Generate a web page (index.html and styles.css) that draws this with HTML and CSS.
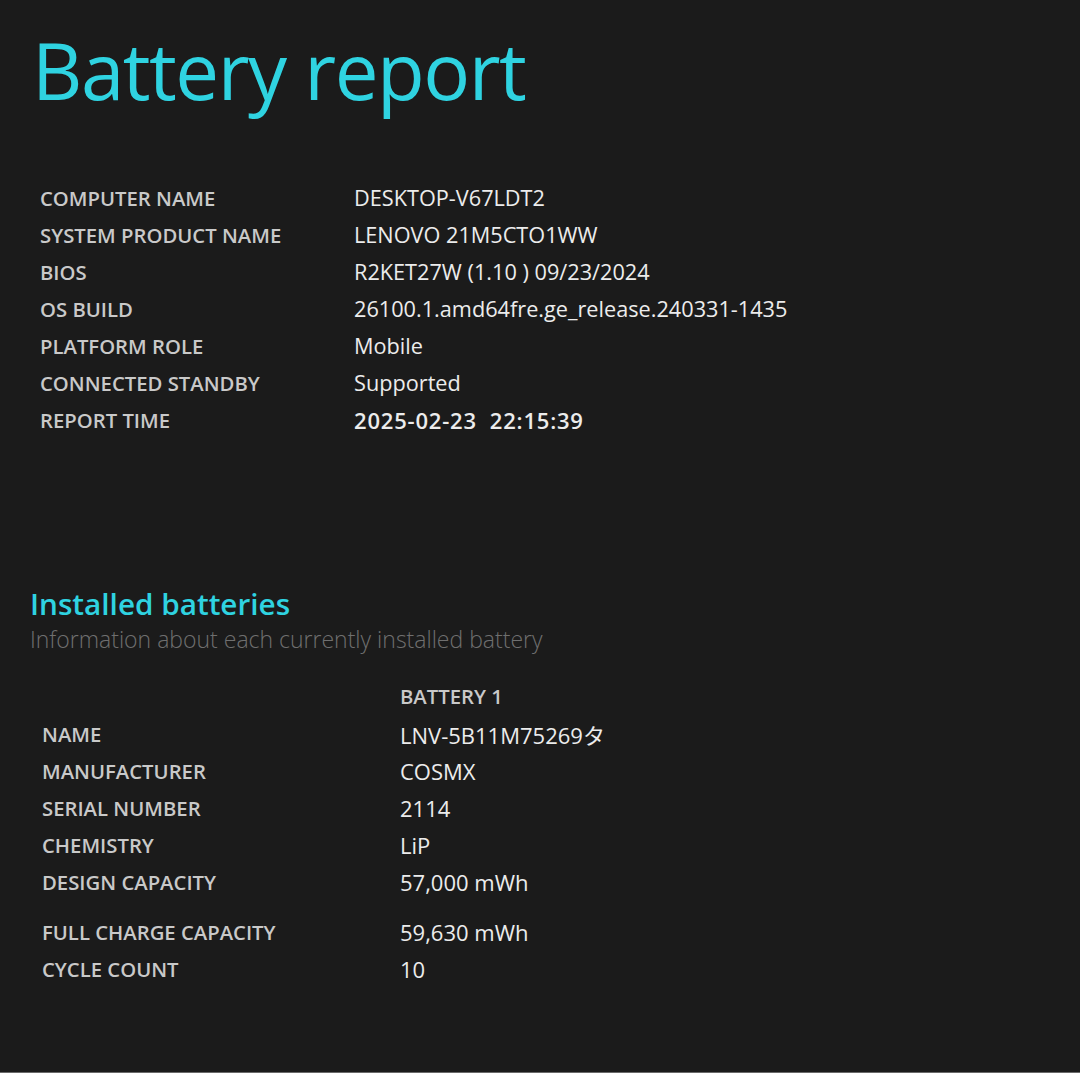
FILE: index.html
```html
<!DOCTYPE html>
<html lang="en">
<head>
    <meta charset="UTF-8">
    <title>Battery report</title>
    <link rel="stylesheet" href="styles.css">
</head>
<body>
    <div class="page">
        <h1 class="title">Battery report</h1>

        <table class="info">
            <tr><td class="label">COMPUTER NAME</td><td class="value">DESKTOP-V67LDT2</td></tr>
            <tr><td class="label">SYSTEM PRODUCT NAME</td><td class="value">LENOVO 21M5CTO1WW</td></tr>
            <tr><td class="label">BIOS</td><td class="value">R2KET27W (1.10 ) 09/23/2024</td></tr>
            <tr><td class="label">OS BUILD</td><td class="value">26100.1.amd64fre.ge_release.240331-1435</td></tr>
            <tr><td class="label">PLATFORM ROLE</td><td class="value">Mobile</td></tr>
            <tr><td class="label">CONNECTED STANDBY</td><td class="value">Supported</td></tr>
            <tr><td class="label">REPORT TIME</td><td class="value strong">2025-02-23&nbsp; 22:15:39</td></tr>
        </table>

        <h2 class="section-title">Installed batteries</h2>
        <p class="section-sub">Information about each currently installed battery</p>

        <table class="batteries">
            <tr class="head"><td class="label"></td><td class="label">BATTERY 1</td></tr>
            <tr><td class="label">NAME</td><td class="value">LNV-5B11M75269タ</td></tr>
            <tr><td class="label">MANUFACTURER</td><td class="value">COSMX</td></tr>
            <tr><td class="label">SERIAL NUMBER</td><td class="value">2114</td></tr>
            <tr><td class="label">CHEMISTRY</td><td class="value">LiP</td></tr>
            <tr><td class="label">DESIGN CAPACITY</td><td class="value">57,000 mWh</td></tr>
            <tr class="spaced"><td class="label">FULL CHARGE CAPACITY</td><td class="value">59,630 mWh</td></tr>
            <tr><td class="label">CYCLE COUNT</td><td class="value">10</td></tr>
        </table>
    </div>
</body>
</html>
```

FILE: styles.css
```css
html, body {
    margin: 0;
    padding: 0;
    height: 100%;
}
body {
    background-color: #1b1b1b;
    color: #e8e8e8;
    font-family: "Open Sans", "Noto Sans", "Noto Sans CJK JP", sans-serif;
    box-sizing: border-box;
    border-bottom: 1px solid #6a6a6a;
}
.page {
    padding: 0 0 0 30px;
}
.title {
    margin: 0 0 0 2px;
    padding-top: 24px;
    font-size: 78px;
    font-weight: 400;
    line-height: 92px;
    color: #2fd3e1;
    letter-spacing: -1.5px;
}
table {
    border-collapse: collapse;
}
td {
    padding: 0;
    height: 37px;
    vertical-align: middle;
    white-space: nowrap;
}
.label {
    font-size: 20.3px;
    font-weight: 600;
    color: #c9c9c9;
}
.value {
    font-size: 21.7px;
    font-weight: 400;
    color: #ececec;
}
.value.strong {
    font-size: 22px;
    font-weight: 600;
    letter-spacing: 0.8px;
}
.info {
    margin: 63px 0 0 10px;
}
.info .label {
    width: 314px;
}
.section-title {
    margin: 148px 0 0 0;
    font-size: 29.7px;
    font-weight: 600;
    line-height: 36px;
    color: #2fd3e1;
}
.section-sub {
    margin: 0;
    font-size: 23px;
    font-weight: 300;
    line-height: 34px;
    color: #6f6f6f;
}
.batteries {
    margin: 21px 0 0 12px;
}
.batteries td:first-child {
    width: 358px;
}
.batteries .value {
    font-size: 22px;
}
.batteries .head td {
    height: 38px;
}
.batteries .spaced td {
    padding-top: 13px;
}
```
